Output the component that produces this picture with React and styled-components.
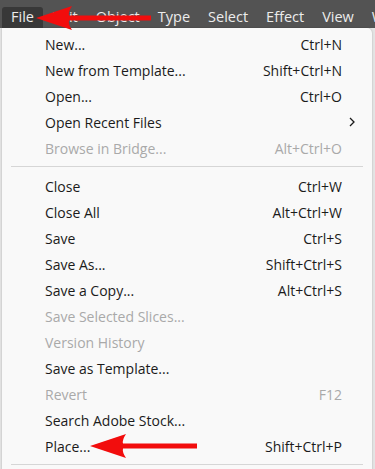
import React from 'react';
import styled, { createGlobalStyle } from 'styled-components';

const GlobalStyle = createGlobalStyle`
  html, body {
    margin: 0;
    padding: 0;
  }
  body {
    background: #e4e4e4;
    font-family: "Open Sans", "Noto Sans", "Liberation Sans", sans-serif;
  }
`;

const Page = styled.div`
  position: relative;
  width: 375px;
  height: 469px;
  overflow: hidden;
  background: #e4e4e4;
`;

const MenuBar = styled.div`
  display: flex;
  align-items: flex-end;
  height: 28px;
  padding-left: 2px;
  background: #535353;
  white-space: nowrap;
  overflow: hidden;
`;

const BarItem = styled.div`
  flex-shrink: 0;
  height: 21px;
  line-height: 20px;
  padding: 0 9px;
  font-size: 14.5px;
  color: #ececec;
  border-radius: 3px 3px 0 0;
  background: ${p => (p.active ? '#383838' : 'transparent')};
`;

const Dropdown = styled.div`
  margin-left: 2px;
  width: 370px;
  height: 460px;
  padding: 3px 0 0;
  box-sizing: border-box;
  background: #f9f9f9;
  border-radius: 0 5px 0 0;
  box-shadow: 0 0 2px rgba(0, 0, 0, 0.25);
`;

const Row = styled.div`
  display: grid;
  grid-template-columns: 1fr auto 30px;
  align-items: center;
  height: 26px;
  padding-left: 43px;
  font-size: 14px;
  color: ${p => (p.disabled ? '#a9a9a9' : '#1b1b1b')};
`;

const Label = styled.span`
  white-space: nowrap;
`;

const Shortcut = styled.span`
  text-align: right;
  white-space: nowrap;
`;

const SubmenuMark = styled.span`
  display: flex;
  justify-content: flex-start;
  padding-left: 7px;
`;

const Separator = styled.div`
  height: 1px;
  margin: ${p => p.margin || '4px 9px 6px 9px'};
  background: #d6d6d6;
`;

const ArrowWrap = styled.svg`
  position: absolute;
  left: ${p => p.x}px;
  top: ${p => p.y}px;
  pointer-events: none;
`;

const Chevron = () => (
  <svg width="6" height="10" viewBox="0 0 6 10">
    <path d="M1 1 L5 5 L1 9" fill="none" stroke="#1b1b1b" strokeWidth="1.3" />
  </svg>
);

// red annotation arrow pointing left; length = tip to tail
const RedArrow = ({ x, y, length }) => (
  <ArrowWrap x={x} y={y} width={length} height={26} viewBox={`0 0 ${length} 26`}>
    <path
      d={`M0 13 L36 1 Q32 7 33 10.5 L${length} 10.5 L${length} 15.5 L33 15.5 Q32 19 36 25 Z`}
      fill="#f20d0d"
    />
  </ArrowWrap>
);

const barItems = ['File', 'Edit', 'Object', 'Type', 'Select', 'Effect', 'View', 'Window'];

const groups = [
  [
    { label: 'New...', key: 'Ctrl+N' },
    { label: 'New from Template...', key: 'Shift+Ctrl+N' },
    { label: 'Open...', key: 'Ctrl+O' },
    { label: 'Open Recent Files', sub: true },
    { label: 'Browse in Bridge...', key: 'Alt+Ctrl+O', disabled: true },
  ],
  [
    { label: 'Close', key: 'Ctrl+W' },
    { label: 'Close All', key: 'Alt+Ctrl+W' },
    { label: 'Save', key: 'Ctrl+S' },
    { label: 'Save As...', key: 'Shift+Ctrl+S' },
    { label: 'Save a Copy...', key: 'Alt+Ctrl+S' },
    { label: 'Save Selected Slices...', disabled: true },
    { label: 'Version History', disabled: true },
    { label: 'Save as Template...' },
    { label: 'Revert', key: 'F12', disabled: true },
    { label: 'Search Adobe Stock...' },
    { label: 'Place...', key: 'Shift+Ctrl+P' },
  ],
];

const App = () => (
  <Page>
    <GlobalStyle />
    <MenuBar>
      {barItems.map((name, i) => (
        <BarItem key={name} active={i === 0}>
          {name}
        </BarItem>
      ))}
    </MenuBar>
    <Dropdown>
      {groups.map((items, g) => (
        <React.Fragment key={g}>
          {items.map(item => (
            <Row key={item.label} disabled={item.disabled}>
              <Label>{item.label}</Label>
              <Shortcut>{item.key}</Shortcut>
              <SubmenuMark>{item.sub && <Chevron />}</SubmenuMark>
            </Row>
          ))}
          <Separator margin={g === 0 ? '5px 9px 6px 9px' : '5px 9px 0 9px'} />
        </React.Fragment>
      ))}
    </Dropdown>
    <RedArrow x={36} y={5} length={115} />
    <RedArrow x={90} y={433} length={107} />
  </Page>
);

export default App;
